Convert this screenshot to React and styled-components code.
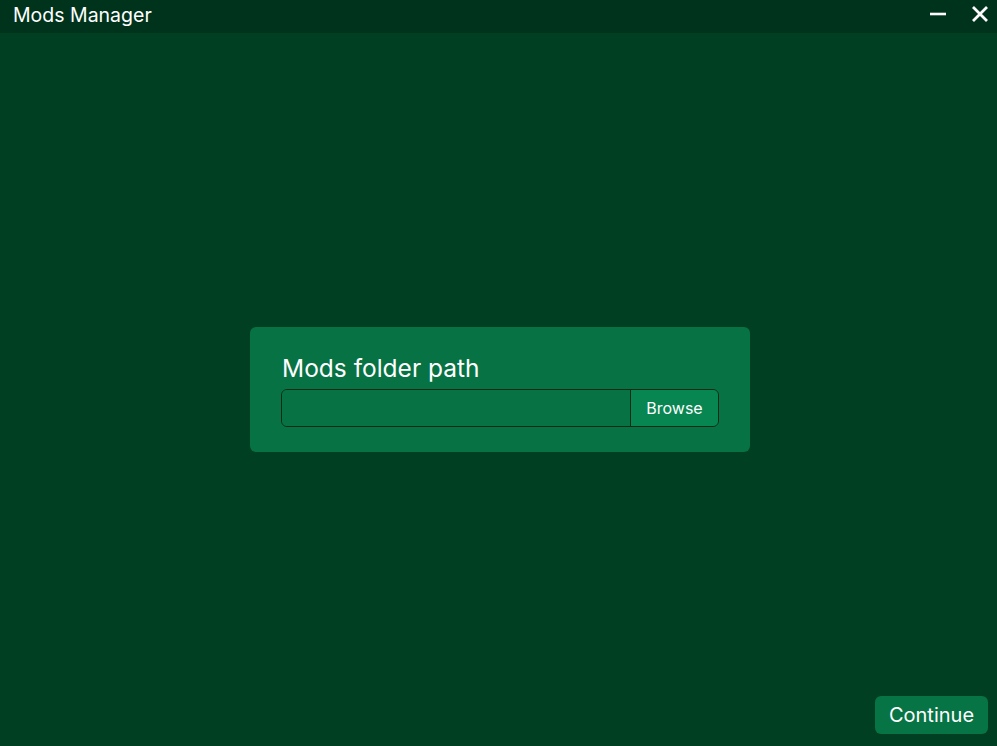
import React from "react";
import styled, { createGlobalStyle } from "styled-components";

const Global = createGlobalStyle`
  html, body { margin: 0; padding: 0; height: 100%; }
  body { background: #003f21; font-family: Inter, "Noto Sans", sans-serif; color: #ffffff; }
  #root { height: 100%; }
  * { box-sizing: border-box; }
`;

const Window = styled.div`
  height: 746px;
  display: flex;
  flex-direction: column;
  background: #003f21;
`;

const TitleBar = styled.div`
  height: 33px;
  flex: none;
  background: #00331c;
  display: flex;
  align-items: center;
  justify-content: space-between;
  padding: 0 0 0 13px;
`;

const Title = styled.div`
  font-size: 19.5px;
  line-height: 30px;
  color: #ffffff;
  margin-top: -3px;
`;

const Controls = styled.div`
  display: flex;
  align-items: center;
  gap: 8px;
  margin-top: -6px;
`;

const CtrlButton = styled.button`
  width: 34px;
  height: 24px;
  border: none;
  background: transparent;
  padding: 0;
  display: flex;
  align-items: center;
  justify-content: center;
  cursor: pointer;
`;

const Main = styled.div`
  flex: 1;
  display: grid;
  grid-template-areas: "stack";
  padding: 12px 9px 12px 12px;
`;

const Center = styled.div`
  grid-area: stack;
  align-self: center;
  justify-self: center;
`;

const Card = styled.div`
  width: 500px;
  background: #077243;
  border-radius: 6px;
  padding: 26px 31px 25px 31px;
  display: flex;
  flex-direction: column;
  gap: 6px;
`;

const Label = styled.div`
  font-size: 24.5px;
  line-height: 30px;
  color: #ffffff;
  padding-left: 1px;
`;

const Field = styled.div`
  display: flex;
  height: 38px;
  border: 1px solid #0a2b18;
  border-radius: 6px;
  overflow: hidden;
`;

const PathInput = styled.input`
  flex: 1;
  min-width: 0;
  border: none;
  background: #077243;
  color: #ffffff;
  font-family: inherit;
  font-size: 16px;
  padding: 0 10px;
  outline: none;
`;

const Browse = styled.button`
  width: 88px;
  border: none;
  border-left: 1px solid #0a2b18;
  background: #088651;
  color: #ffffff;
  font-family: inherit;
  font-size: 16px;
  padding: 0;
  cursor: pointer;
`;

const Continue = styled.button`
  grid-area: stack;
  align-self: end;
  justify-self: end;
  width: 113px;
  height: 38px;
  border: none;
  border-radius: 6px;
  background: #067444;
  color: #ffffff;
  font-family: inherit;
  font-size: 20px;
  padding: 0;
  cursor: pointer;
`;

export default function App() {
  return (
    <Window>
      <Global />
      <TitleBar>
        <Title>Mods Manager</Title>
        <Controls>
          <CtrlButton aria-label="Minimize">
            <svg width="18" height="18" viewBox="0 0 18 18">
              <line x1="1" y1="9" x2="17" y2="9" stroke="#fff" strokeWidth="2.6" />
            </svg>
          </CtrlButton>
          <CtrlButton aria-label="Close">
            <svg width="18" height="18" viewBox="0 0 18 18">
              <path d="M2 2 L16 16 M16 2 L2 16" stroke="#fff" strokeWidth="2.8" strokeLinecap="butt" />
            </svg>
          </CtrlButton>
        </Controls>
      </TitleBar>
      <Main>
        <Center>
          <Card>
            <Label>Mods folder path</Label>
            <Field>
              <PathInput type="text" />
              <Browse>Browse</Browse>
            </Field>
          </Card>
        </Center>
        <Continue>Continue</Continue>
      </Main>
    </Window>
  );
}
